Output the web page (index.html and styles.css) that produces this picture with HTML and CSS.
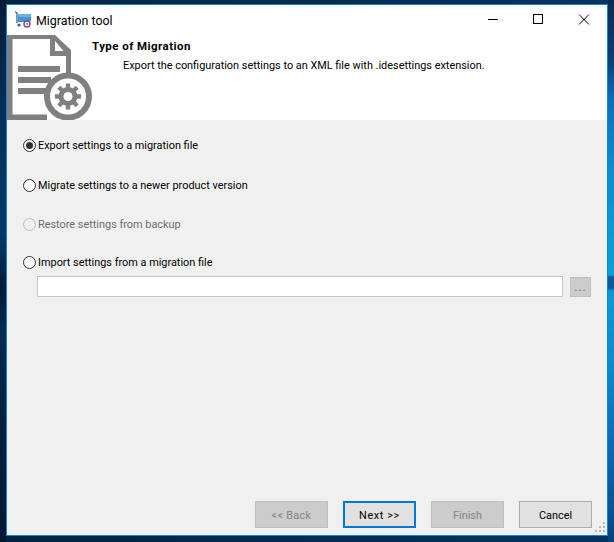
FILE: index.html
```html
<!DOCTYPE html>
<html lang="en">
<head>
<meta charset="utf-8">
<title>Migration tool</title>
<link rel="stylesheet" href="styles.css">
</head>
<body>
<div class="window">
  <div class="titlebar">
    <svg class="app-icon" width="18" height="18" viewBox="0 0 18 18">
      <path d="M0 1 L2 2 V12" fill="none" stroke="#2a6a96" stroke-width="1.3"/>
      <path d="M3 3 H16 V10 L14 11 H3 Z" fill="#4a93cc"/>
      <path d="M3 3 H16 V6 H3 Z" fill="#6fb0de"/>
      <circle cx="4" cy="14" r="1.6" fill="#2c5f8a"/>
      <circle cx="12" cy="13" r="3" fill="#fff" stroke="#7a4a9a" stroke-width="1.4"/>
      <circle cx="12" cy="13" r="0.9" fill="#7a4a9a"/>
    </svg>
    <span class="title">Migration tool</span>
    <div class="controls">
      <svg class="ctl" width="46" height="30" viewBox="0 0 46 30"><path d="M19 14.5 H29" stroke="#000" fill="none"/></svg>
      <svg class="ctl" width="46" height="30" viewBox="0 0 46 30"><rect x="18.5" y="9.5" width="9" height="9" stroke="#000" fill="none"/></svg>
      <svg class="ctl" width="46" height="30" viewBox="0 0 46 30"><path d="M18 9.5 L28 19.5 M28 9.5 L18 19.5" stroke="#000" fill="none"/></svg>
    </div>
  </div>
  <div class="header">
    <svg class="doc-icon" width="85" height="85" viewBox="0 0 85 85">
      <path d="M0 0 H48 L64 15 V50 H59 V21 H43 V4 H5.5 V79.5 H40 V85 H0 Z" fill="#808080"/>
      <path d="M48 6 L56.5 16 H48 Z" fill="#fff"/>
      <rect x="11" y="31" width="42" height="6" fill="#808080"/>
      <rect x="11" y="42" width="33" height="6" fill="#808080"/>
      <rect x="11" y="53" width="28" height="6" fill="#808080"/>
      <circle cx="61" cy="61.5" r="21" fill="#fff" stroke="#808080" stroke-width="6"/>
      <circle cx="61" cy="61.5" r="7" fill="none" stroke="#808080" stroke-width="5"/>
      <path d="M61 48.5 V74.5 M48 61.5 H74 M51.8 52.3 L70.2 70.7 M70.2 52.3 L51.8 70.7" stroke="#808080" stroke-width="4.4" fill="none"/>
      <circle cx="61" cy="61.5" r="4.5" fill="#fff"/>
    </svg>
    <div class="header-text">
      <div class="heading">Type of Migration</div>
      <div class="desc">Export the configuration settings to an XML file with .idesettings extension.</div>
    </div>
  </div>
  <div class="content">
    <div class="options">
      <div class="option opt-1"><span class="radio checked"></span><span>Export settings to a migration file</span></div>
      <div class="option opt-2"><span class="radio"></span><span>Migrate settings to a newer product version</span></div>
      <div class="option opt-3 disabled"><span class="radio"></span><span>Restore settings from backup</span></div>
      <div class="option opt-4"><span class="radio"></span><span>Import settings from a migration file</span></div>
      <div class="file-row">
        <div class="file-input"></div>
        <div class="browse">...</div>
      </div>
    </div>
    <div class="footer">
      <div class="btn off back">&lt;&lt; Back</div>
      <div class="btn primary">Next &gt;&gt;</div>
      <div class="btn off">Finish</div>
      <div class="btn">Cancel</div>
    </div>
    <svg class="grip" width="12" height="12" viewBox="0 0 12 12" fill="#b8b8b8">
      <rect x="8" y="0" width="2" height="2"/><rect x="4" y="4" width="2" height="2"/><rect x="8" y="4" width="2" height="2"/>
      <rect x="0" y="8" width="2" height="2"/><rect x="4" y="8" width="2" height="2"/><rect x="8" y="8" width="2" height="2"/>
    </svg>
  </div>
</div>
</body>
</html>
```
FILE: styles.css
```css
* { box-sizing: border-box; }
html, body { margin: 0; height: 100%; }
body {
  width: 614px;
  height: 542px;
  overflow: hidden;
  padding: 4px 0 0 6px;
  background-color: #04274e;
  background-image:
    linear-gradient(180deg, #0b2c52 0, #0a3f78 60px, #0a6fc0 100px, #0a8fd2 170px, #0aa0dc 275px, #0a5a9e 277px, #0a5a9e 288px, #0a9ad8 291px, #0a8ad0 370px, #0a70c0 430px, #094f92 520px, #073f76 100%),
    linear-gradient(180deg, #041d38 0, #03315e 130px, #03386c 230px, #02294f 268px, #021a34 285px, #032b55 330px, #031f3e 430px, #041a33 100%),
    linear-gradient(90deg, #04233f 0, #07345f 100%);
  background-repeat: no-repeat;
  background-size: 6px 100%, 6px 100%, 100% 100%;
  background-position: right top, left top, left top;
  font-family: Roboto, "Noto Sans", sans-serif;
  font-size: 10.9px;
  color: #000;
}
.window {
  width: 602px;
  height: 532px;
  border: 1px solid #1483d8;
  background: #fff;
  display: flex;
  flex-direction: column;
}
.titlebar {
  height: 30px;
  display: flex;
  align-items: center;
  padding-left: 8px;
  flex: none;
}
.app-icon { flex: none; margin-right: 3px; }
.title { font-size: 12.4px; flex: 1; }
.controls { display: flex; }
.ctl { display: block; }
.header {
  height: 85px;
  flex: none;
  display: flex;
}
.doc-icon { flex: none; display: block; }
.header-text { padding-top: 3px; }
.heading { font-weight: 700; font-size: 11.5px; letter-spacing: 0.45px; line-height: 16px; }
.desc { line-height: 16px; margin: 4px 0 0 31px; }
.content {
  flex: 1;
  background: #f0f0f0;
  position: relative;
  display: flex;
  flex-direction: column;
}
.options { flex: 1; padding: 17px 15px 0 16px; }
.option { display: flex; align-items: center; height: 16px; }
.opt-2 { margin-top: 24px; }
.opt-3 { margin-top: 23px; }
.opt-4 { margin-top: 22px; }
.disabled { color: #6d6d6d; }
.radio {
  width: 13px;
  height: 13px;
  border: 1px solid #333;
  border-radius: 50%;
  background: #fff;
  margin-right: 2px;
  flex: none;
  position: relative;
}
.checked::after {
  content: "";
  position: absolute;
  inset: 2px;
  border-radius: 50%;
  background: #333;
}
.disabled .radio { border-color: #bcbcbc; background: #f0f0f0; }
.file-row { display: flex; margin: 6px 0 0 14px; gap: 7px; }
.file-input { width: 526px; height: 21px; background: #fff; border: 1px solid #c4c4c4; }
.browse {
  width: 21px; height: 20px; margin-top: 1px; background: #ccc; border: 1px solid #bfbfbf;
  color: #666; font-size: 12px; line-height: 19px; text-align: center; letter-spacing: 1px;
}
.footer {
  display: flex;
  justify-content: flex-end;
  gap: 15px;
  padding: 0 15px 7px 0;
}
.btn {
  width: 73px;
  height: 27px;
  border: 1px solid #adadad;
  background: #e1e1e1;
  line-height: 27px;
  text-align: center;
}
.off { background: #ccc; border-color: #bfbfbf; color: #838383; }
.back { letter-spacing: 0.3px; }
.primary { border: 2px solid #0078d7; line-height: 25px; letter-spacing: 0.6px; }
.grip { position: absolute; right: 0; bottom: 1px; }
```
